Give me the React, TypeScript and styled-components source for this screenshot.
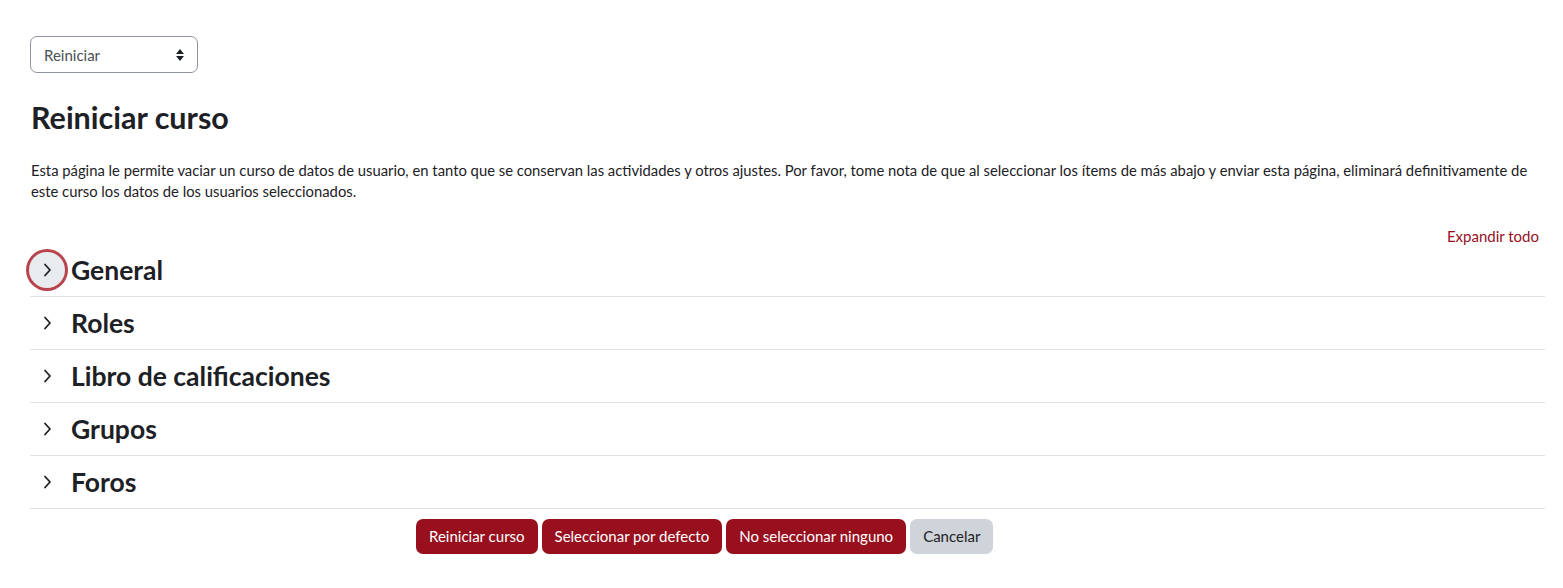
import styled, { createGlobalStyle } from "styled-components"

const GlobalStyle = createGlobalStyle`
  body {
    margin: 0;
    background: #fff;
    font-family: Lato, "Open Sans", sans-serif;
    color: #1d2125;
  }
`

const Page = styled.div`
  padding: 36px 18px 0 30px;
  display: flex;
  flex-direction: column;
`

const SelectBox = styled.div`
  width: 168px;
  height: 37px;
  box-sizing: border-box;
  border: 1px solid #8f959e;
  border-radius: 7px;
  display: flex;
  align-items: center;
  justify-content: space-between;
  padding: 0 12px 0 13px;
  font-size: 15px;
  color: #495057;
`

const Heading = styled.h2`
  font-size: 30.5px;
  font-weight: 700;
  margin: 26px 0 0 1px;
  line-height: 1.2;
`

const Intro = styled.p`
  font-size: 14.8px;
  line-height: 21px;
  margin: 24px 0 0 1px;
`

const ExpandRow = styled.div`
  display: flex;
  justify-content: flex-end;
  margin-top: 25px;
  padding-right: 6px;
  font-size: 15px;
  color: #98101e;
`

const Sections = styled.div`
  display: flex;
  flex-direction: column;
  margin-top: -1px;
`

const Section = styled.div`
  height: 53px;
  box-sizing: border-box;
  border-bottom: 1px solid #dee2e6;
  display: flex;
  align-items: center;
`

const Toggle = styled.div<{ focused?: boolean }>`
  width: 36px;
  height: 36px;
  flex-shrink: 0;
  border-radius: 50%;
  display: flex;
  align-items: center;
  justify-content: center;
  background: ${props => props.focused ? "#e9ecef" : "transparent"};
  box-shadow: ${props => props.focused ? "0 0 0 3px #b8434f" : "none"};
  margin-left: -1px;
  color: #1d2125;
`

const SectionTitle = styled.h3`
  font-size: 26.5px;
  font-weight: 700;
  margin: 0 0 0 6px;
`

const Buttons = styled.div`
  display: flex;
  gap: 4px;
  padding-left: 386px;
  margin-top: 10px;
`

const Button = styled.button<{ secondary?: boolean }>`
  height: 35px;
  border: none;
  border-radius: 7px;
  padding: 0 13px;
  font-family: Lato, sans-serif;
  font-size: 15px;
  background: ${props => props.secondary ? "#ced4da" : "#98101e"};
  color: ${props => props.secondary ? "#1d2125" : "#fff"};
`

const Chevron = () => (
  <svg width="10" height="14" viewBox="0 0 10 14" fill="none" stroke="currentColor" strokeWidth="1.8" strokeLinecap="round" strokeLinejoin="round">
    <path d="M3 1.5 L8 7 L3 12.5" />
  </svg>
)

const Updown = () => (
  <svg width="10" height="14" viewBox="0 0 10 14" fill="#1d2125">
    <path d="M5 1 L9 6 H1 Z M5 13 L9 8 H1 Z" />
  </svg>
)

const sections = ["General", "Roles", "Libro de calificaciones", "Grupos", "Foros"]

export default function App() {
  return (
    <>
      <GlobalStyle />
      <Page>
        <SelectBox>
          <span>Reiniciar</span>
          <Updown />
        </SelectBox>
        <Heading>Reiniciar curso</Heading>
        <Intro>
          Esta página le permite vaciar un curso de datos de usuario, en tanto que se conservan las actividades y otros ajustes. Por favor, tome nota de que al seleccionar los ítems de más abajo y enviar esta página, eliminará definitivamente de este curso los datos de los usuarios seleccionados.
        </Intro>
        <ExpandRow>Expandir todo</ExpandRow>
        <Sections>
          {sections.map((s, i) => (
            <Section key={s}>
              <Toggle focused={i === 0}><Chevron /></Toggle>
              <SectionTitle>{s}</SectionTitle>
            </Section>
          ))}
        </Sections>
        <Buttons>
          <Button>Reiniciar curso</Button>
          <Button>Seleccionar por defecto</Button>
          <Button>No seleccionar ninguno</Button>
          <Button secondary>Cancelar</Button>
        </Buttons>
      </Page>
    </>
  )
}
